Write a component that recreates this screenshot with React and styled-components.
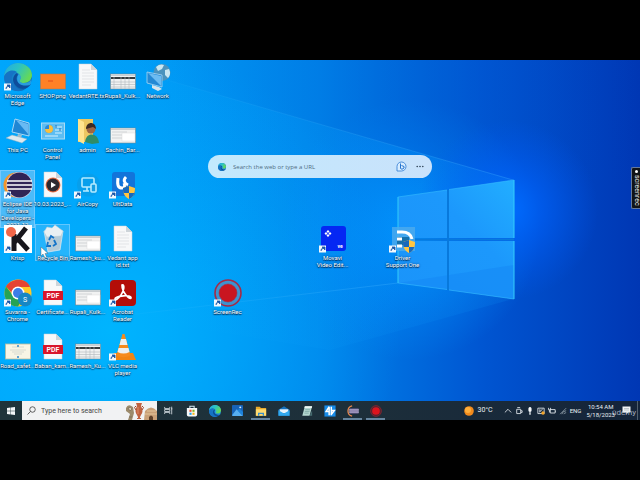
import React from "react";
import styled, { createGlobalStyle, css } from "styled-components";

const GlobalStyle = createGlobalStyle`
  * { box-sizing: border-box; }
  body {
    margin: 0;
    background: #000;
    font-family: Roboto, "Open Sans", sans-serif;
  }
  button {
    font: inherit;
    color: inherit;
    border: 0;
    padding: 0;
    background: none;
  }
  svg { display: block; }
`;

const Page = styled.main`
  min-height: 100vh;
  display: flex;
  flex-direction: column;
  justify-content: center;
  background: #000;
`;

const Screen = styled.div`
  position: relative;
  aspect-ratio: 16 / 9;
  display: flex;
  flex-direction: column;
  overflow: hidden;
`;

const Desktop = styled.section`
  position: relative;
  flex: 1;
  min-height: 0;
  background: #0078e8;
`;

const Wallpaper = styled.svg`
  position: absolute;
  inset: 0;
  width: 100%;
  height: 100%;
`;

const IconGrid = styled.ul`
  position: relative;
  margin: 0;
  padding: 2px 0 0;
  list-style: none;
  display: grid;
  grid-template-columns: repeat(auto-fill, 35px);
  grid-auto-rows: 54px;
`;

const IconCell = styled.li`
  grid-column: ${(p) => p.$col};
  grid-row: ${(p) => p.$row};
`;

const Shortcut = styled.button`
  position: relative;
  width: 35px;
  display: flex;
  flex-direction: column;
  align-items: center;
  padding-top: 1px;
  gap: 1px;
  ${(p) =>
    p.$state === "selected" &&
    css`
      background: rgba(150, 205, 245, 0.5);
      box-shadow: inset 0 0 0 1px rgba(170, 220, 255, 0.45);
    `}
  ${(p) =>
    p.$state === "hover" &&
    css`
      background: rgba(130, 205, 250, 0.28);
      box-shadow: inset 0 0 0 1px rgba(150, 215, 255, 0.55);
    `}
`;

const IconArt = styled.svg`
  width: 28px;
  height: 28px;
  overflow: visible;
`;

const IconLabel = styled.span`
  color: #fff;
  font-size: 6px;
  line-height: 7px;
  white-space: pre;
  text-align: center;
  text-shadow: 0 1px 1px rgba(0, 20, 50, 0.95), 0 0 2px rgba(0, 30, 70, 0.9);
`;

const SearchBar = styled.form`
  position: absolute;
  top: 95px;
  left: 0;
  right: 0;
  margin: 0 auto;
  width: 35%;
  height: 23px;
  padding: 0 6px 0 10px;
  display: flex;
  align-items: center;
  gap: 7px;
  border-radius: 12px;
  background: linear-gradient(90deg, #c2e9fd, #c9e2fb);
  color: #35506b;
`;

const WebInput = styled.input`
  flex: 1;
  min-width: 0;
  border: 0;
  padding: 0;
  outline: 0;
  background: none;
  font-family: "Open Sans", sans-serif;
  font-size: 6px;
  color: #4d6478;
  &::placeholder { color: #4f6c82; opacity: 1; }
`;

const BarButton = styled.button`
  width: 12px;
  height: 12px;
  display: grid;
  place-items: center;
`;

const RecorderTab = styled.button`
  position: absolute;
  right: 0;
  top: 107px;
  width: 9px;
  height: 42px;
  display: flex;
  align-items: center;
  justify-content: center;
  gap: 2px;
  writing-mode: vertical-rl;
  background: #111418;
  border: 1px solid #66799a;
  border-right: 0;
  border-radius: 2px 0 0 2px;
  color: #e8e8e8;
  font-size: 7px;
  line-height: 7px;
`;

const RecorderDot = styled.span`
  width: 3px;
  height: 3px;
  border-radius: 50%;
  background: #fff;
`;

const Pointer = styled.svg`
  position: absolute;
  left: 40px;
  top: 187px;
  width: 8px;
  height: 11px;
`;

const Taskbar = styled.footer`
  height: 19px;
  display: flex;
  align-items: stretch;
  color: #e8eef2;
  background: linear-gradient(90deg, #1f343b, #1d2f3a 55%, #14243a);
`;

const StartButton = styled.button`
  width: 22px;
  display: grid;
  place-items: center;
`;

const TaskSearch = styled.label`
  width: 135px;
  display: flex;
  align-items: center;
  gap: 5px;
  padding-left: 5px;
  background: #f1f2f3;
`;

const TaskInput = styled.input`
  flex: 1;
  min-width: 0;
  border: 0;
  padding: 0;
  outline: 0;
  background: none;
  font-family: Roboto, "Open Sans", sans-serif;
  font-size: 7px;
  &::placeholder { color: #454545; opacity: 1; }
`;

const AppButton = styled.button`
  width: 23px;
  display: grid;
  place-items: center;
  ${(p) =>
    p.$open &&
    css`
      background: linear-gradient(#66859f, #66859f) center bottom / 19px 2px no-repeat;
    `}
`;

const Tray = styled.div`
  margin-left: auto;
  display: flex;
  align-items: center;
  gap: 3px;
  padding-right: 3px;
  border-right: 1px solid #51606e;
  margin-right: 2px;
`;

const Weather = styled.button`
  display: flex;
  align-items: center;
  gap: 4px;
  margin-right: 8px;
  font-size: 7px;
  line-height: 9px;
`;

const TrayButton = styled.button`
  width: 8px;
  height: 10px;
  display: grid;
  place-items: center;
`;

const Language = styled.button`
  font-size: 6px;
  line-height: 8px;
  margin-right: 2px;
`;

const Clock = styled.time`
  display: flex;
  flex-direction: column;
  align-items: center;
  font-size: 6px;
  line-height: 8px;
  white-space: nowrap;
`;

const Notifications = styled(TrayButton)`
  width: 16px;
`;

const Watermark = styled.span`
  position: absolute;
  right: 4px;
  bottom: 2px;
  color: rgba(215, 222, 230, 0.75);
  font-size: 8px;
  line-height: 10px;
`;

const EdgeLogo = () => (
  <>
    <circle cx="14" cy="14" r="14" fill="url(#edgeBlue)" />
    <path d="M0 13C1 5 7 0 14 0c8 0 14 6 14 12 0 5-4 8-8 8-4 0-5-2-4-3 1-2 1-4-1-6C11 7 3 8 0 13z" fill="url(#edgeGreen)" />
    <path d="M0 14C2 8 8 6 13 9c-4 1-6 5-5 9 1 6 7 9 12 9C10 31 0 24 0 14z" fill="#1673c5" />
    <path d="M13 10c-5 3-5 9-1 13 4 4 11 4 15-2-4 2-9 2-12-1-3-2-3-6-1-8z" fill="#0d4d9c" />
    <path d="M15 11c2 2 2 4 1 6-1 1 0 3 4 3 3 0 6-1 7.500-4 0 2-.5 4-1.500 6-4 1-9 1-11.500-2-2-3-1.500-7 .5-9z" fill="#35b8f4" opacity=".65" />
  </>
);

const EclipseLogo = () => (
  <>
    <circle cx="12" cy="14" r="12.500" fill="#f3952a" />
    <circle cx="15.500" cy="14" r="13" fill="#d9d4ec" />
    <circle cx="15.500" cy="14" r="12.500" fill="#302456" />
    <path d="M3 10h25M3 14h25M3 18h25" stroke="#fff" strokeWidth="1.700" />
  </>
);

const Sheet = () => (
  <>
    <path d="M5 1h12l6 6v19H5z" fill="#f7f8f9" stroke="#c9d0d5" strokeWidth=".5" />
    <path d="M17 1v6h6z" fill="#cdd4d9" />
  </>
);

const TextFile = () => (
  <>
    <Sheet />
    <path d="M8 7h8M8 10h12M8 13h12M8 16h12M8 19h12M8 22h9" stroke="#d9dde0" strokeWidth=".7" />
  </>
);

const PdfFile = () => (
  <>
    <Sheet />
    <rect x="4" y="12" width="20" height="9" fill="#d8162b" />
    <text x="14" y="19" fontSize="7" fontWeight="600" fill="#fff" textAnchor="middle">PDF</text>
  </>
);

const SheetShot = ({ dark }) => (
  <>
    <rect x="1.500" y="11" width="25" height="15" fill="#f1f2f2" stroke="#6f8590" strokeWidth=".6" />
    <path d="M2 12.500h24" stroke="#c9ced1" />
    {dark ? (
      <>
        <rect x="2" y="14" width="24" height="2" fill="#363b3e" />
        <path d="M2 19h24M2 21.500h24M2 24h24" stroke="#b0b6b9" strokeWidth=".6" />
        <path d="M5 14v12M12 14v12M16 14v12M20 14v12" stroke="#b4bbbf" strokeWidth=".6" />
      </>
    ) : (
      <>
        <path d="M3 15h15M3 18h10M3 21h10" stroke="#b0b5b8" strokeWidth=".5" />
        <rect x="13" y="16" width="13" height="8" fill="#fff" stroke="#d5d7d8" strokeWidth=".4" />
      </>
    )}
  </>
);

const Shield = () => (
  <g>
    <path d="M14 17l6-2 6 2c0 6-2 9-6 11-4-2-6-5-6-11z" fill="#ffc541" />
    <path d="M20 15l-6 2c0 2 .1 3.500.6 5H20zM20 22h5.400c-1 3-2.700 5-5.400 6z" fill="#1769bd" />
  </g>
);

const art = {
  edge: <EdgeLogo />,
  shop: (
    <>
      <rect x="1.500" y="11" width="25" height="15" fill="#ff8126" stroke="#b5794e" strokeWidth=".6" />
      <path d="M9 18h5" stroke="#e34a1b" strokeWidth="1" />
    </>
  ),
  text: <TextFile />,
  sheetDark: <SheetShot dark />,
  sheet: <SheetShot />,
  network: (
    <>
      <circle cx="18" cy="9.500" r="8.500" fill="#4b93bd" />
      <path d="M12 4c3-3 6-3 8-2l-2 4-4 2zM21 7l4-1c2 4 1 7-1 9l-3-3z" fill="#c9e7f2" />
      <path d="M3 9l15 3v12L3 20z" fill="#2489d4" stroke="#a9d8f2" strokeWidth=".8" />
      <path d="M4 10l13 3v10z" fill="#6cbcf2" />
      <path d="M8 22l7 2 3 2-4 2-6-3z" fill="#d6e4ec" />
    </>
  ),
  pc: (
    <>
      <path d="M11 2l14 4v13L8 15z" fill="#1f86d4" stroke="#a8d8f4" strokeWidth="1" />
      <path d="M12 3l12 4v10z" fill="#68baf3" />
      <path d="M14 17l4 1-1 3-4-1z" fill="#9fbccc" />
      <path d="M2 21l6-3 15 4-5 4z" fill="#dce9ef" stroke="#88aabe" strokeWidth=".5" />
    </>
  ),
  control: (
    <>
      <rect x="2.500" y="6" width="23" height="16" fill="#5dbdf2" stroke="#a9dcf5" />
      <circle cx="10" cy="12" r="4" fill="#2a88d9" />
      <path d="M10 12V8a4 4 0 1 1-4 4z" fill="#f9bf3d" />
      <path d="M16 10h7M16 13h7M16 16h7M6 19h13" stroke="#d6f1ff" strokeWidth="1" />
      <path d="M17 8v3M21 11v3" stroke="#2373b7" />
    </>
  ),
  admin: (
    <>
      <path d="M4 2h15v23H4z" fill="#ecc863" />
      <path d="M4 2l6 3v22l-6-3z" fill="#ffe48f" />
      <circle cx="17" cy="12" r="4.500" fill="#9c6544" />
      <path d="M12 12c0-8 10-8 10 0l-3-2z" fill="#3c2a24" />
      <path d="M11 25c1-10 13-10 14 1l-7 1z" fill="#2f8c68" />
    </>
  ),
  eclipse: <EclipseLogo />,
  media: (
    <>
      <Sheet />
      <circle cx="14" cy="14" r="7.500" fill="#ec7046" />
      <circle cx="14" cy="14" r="6.500" fill="#2d2930" />
      <path d="M12 11l5 3-5 3z" fill="#fff" />
    </>
  ),
  aircopy: (
    <>
      <circle cx="14.500" cy="14" r="11.500" fill="#079fec" />
      <g fill="none" stroke="#b5ebff" strokeWidth="1.600">
        <rect x="8" y="7" width="12" height="9" rx="1" />
        <path d="M13 16v4M9 20h6" />
        <rect x="17" y="13" width="5" height="8" rx="1" fill="#169fe2" />
      </g>
    </>
  ),
  utdate: (
    <>
      <rect x="3" y="1" width="23" height="24" rx="3" fill="#1274da" />
      <path d="M9 7c-1 7 0 10 4 10 3 0 3-3 2-5M17 6c-3 3-2 6 2 8" stroke="#fff" strokeWidth="3" fill="none" />
      <Shield />
    </>
  ),
  krisp: (
    <>
      <rect width="28" height="28" fill="#fff" />
      <path d="M10 9v17M10 18L22 3M14 14l10 11" stroke="#17161c" strokeWidth="5" />
      <circle cx="7" cy="7" r="5" fill="#f16648" />
    </>
  ),
  bin: (
    <>
      <path d="M5 6h19l-3 19-12 2z" fill="#b4cbd8" stroke="#dcebf2" strokeWidth=".7" />
      <path d="M5 7l3-5 5 1 3-3 4 3 4 3-2 5-14 1z" fill="#e9f0f3" stroke="#b7ccd5" strokeWidth=".5" />
      <path d="M10 15l2-4 3 2M15 15l2 4-3 2M12 21H8l1-4" fill="none" stroke="#1474c8" strokeWidth="1.800" />
    </>
  ),
  chrome: (
    <>
      <circle cx="14" cy="14" r="13.500" fill="#ffca28" />
      <path d="M2 7.500C8-2 23-1 26 8H14c-4 0-6 3-6 6z" fill="#e44434" />
      <path d="M2 7.500C-2 17 3 27 14 27.500l6-10c-3 4-9 3-11-1z" fill="#26a354" />
      <circle cx="14" cy="14" r="6.500" fill="#fff" />
      <circle cx="14" cy="14" r="5" fill="#3b7ee8" />
      <circle cx="21" cy="20.500" r="7" fill="#1687c4" />
      <text x="21" y="23" fontSize="7" fill="#fff" textAnchor="middle">S</text>
    </>
  ),
  pdf: <PdfFile />,
  acrobat: (
    <>
      <rect x="1" y="1" width="26" height="26" rx="4" fill="#b30d08" />
      <path d="M13 6c3-1 2 6-1 10-3 4-6 6-6 4 0-3 17-5 16-1-1 2-9-5-9-13z" fill="none" stroke="#fff" strokeWidth="1.700" />
    </>
  ),
  certificate: (
    <>
      <rect x="1.500" y="11" width="25" height="15" fill="#f8f5e5" stroke="#b9bc9f" strokeWidth=".8" />
      <path d="M8 14h12M6 17h16M8 19h12M10 21h8" stroke="#c3cac2" strokeWidth=".6" />
      <circle cx="14" cy="13" r="1" fill="#3587c6" />
      <circle cx="14" cy="24" r="1" fill="#3587c6" />
    </>
  ),
  vlc: (
    <>
      <path d="M5 20h19l3 7H2z" fill="#f18513" />
      <path d="M13.500 1h2l6 21c-4 3-10 3-14 0z" fill="#f68b1c" />
      <path d="M12 6h5l1.500 6h-8zM9.500 15h10l1 4c-4 2-8 2-12 0z" fill="#edf0ef" />
    </>
  ),
  screenrec: (
    <>
      <circle cx="14" cy="14" r="13" fill="#3c93cf" stroke="#a62a46" strokeWidth="1.600" />
      <circle cx="14" cy="14" r="9" fill="#c91520" stroke="#a62a46" strokeWidth=".6" />
    </>
  ),
  movavi: (
    <>
      <rect x="2" y="1" width="25" height="25" rx="3" fill="#0527f3" />
      <path d="M9 5l1.500 1.500L9 8 7.500 6.500zM9 9l1.500 1.500L9 12l-1.500-1.500zM7 7l1.500 1.500L7 10 5.500 8.500zM11 7l1.500 1.500L11 10 9.500 8.500z" fill="#fff" />
      <text x="21" y="23" fontSize="5" fontWeight="700" fill="#fff" textAnchor="middle">ve</text>
    </>
  ),
  driver: (
    <>
      <rect x="3" y="2" width="23" height="24" fill="#4eabee" opacity=".8" />
      <path d="M8 12h12v8H8z" fill="#1671ac" />
      <path d="M8 7h5c6 0 9 3 10 7M8 14h5M8 21h5" fill="none" stroke="#fff" strokeWidth="3" />
      <Shield />
    </>
  ),
};

const shortcuts = [
  { col: 1, row: 1, icon: "edge", label: "Microsoft\nEdge", link: true },
  { col: 1, row: 2, icon: "pc", label: "This PC" },
  { col: 1, row: 3, icon: "eclipse", label: "Eclipse IDE\nfor Java\nDevelopers -\n2021-12", link: true, state: "selected" },
  { col: 1, row: 4, icon: "krisp", label: "Krisp", link: true },
  { col: 1, row: 5, icon: "chrome", label: "Suvarna -\nChrome", link: true },
  { col: 1, row: 6, icon: "certificate", label: "Road_safet..." },
  { col: 2, row: 1, icon: "shop", label: "SHOP.png" },
  { col: 2, row: 2, icon: "control", label: "Control\nPanel" },
  { col: 2, row: 3, icon: "media", label: "10.03.2023_..." },
  { col: 2, row: 4, icon: "bin", label: "Recycle Bin", state: "hover" },
  { col: 2, row: 5, icon: "pdf", label: "Certificate..." },
  { col: 2, row: 6, icon: "pdf", label: "Baban_kam..." },
  { col: 3, row: 1, icon: "text", label: "VedantRTE.txt" },
  { col: 3, row: 2, icon: "admin", label: "admin" },
  { col: 3, row: 3, icon: "aircopy", label: "AirCopy", link: true },
  { col: 3, row: 4, icon: "sheet", label: "Ramesh_ku..." },
  { col: 3, row: 5, icon: "sheet", label: "Rupali_Kulk..." },
  { col: 3, row: 6, icon: "sheetDark", label: "Ramesh_Ku..." },
  { col: 4, row: 1, icon: "sheetDark", label: "Rupali_Kulk..." },
  { col: 4, row: 2, icon: "sheet", label: "Sachin_Bar..." },
  { col: 4, row: 3, icon: "utdate", label: "UltData", link: true },
  { col: 4, row: 4, icon: "text", label: "Vedant app\nid.txt" },
  { col: 4, row: 5, icon: "acrobat", label: "Acrobat\nReader", link: true },
  { col: 4, row: 6, icon: "vlc", label: "VLC media\nplayer", link: true },
  { col: 5, row: 1, icon: "network", label: "Network" },
  { col: 7, row: 5, icon: "screenrec", label: "ScreenRec", link: true },
  { col: 10, row: 4, icon: "movavi", label: "Movavi\nVideo Edit...", link: true },
  { col: 12, row: 4, icon: "driver", label: "Driver\nSupport One", link: true },
];

const DesktopIcon = ({ item }) => (
  <IconCell $col={item.col} $row={item.row}>
    <Shortcut type="button" $state={item.state}>
      <IconArt viewBox="0 0 28 28" aria-hidden="true">
        {art[item.icon]}
        {item.link && (
          <g>
            <rect x="0" y="20.500" width="7" height="7" fill="#f3f8fc" />
            <path d="M2 26c0-2 1-3 2.500-3M3 22h3v3z" fill="#1a57a8" stroke="#1a57a8" strokeWidth=".8" />
          </g>
        )}
      </IconArt>
      <IconLabel>{item.label}</IconLabel>
    </Shortcut>
  </IconCell>
);

const WallpaperArt = () => (
  <Wallpaper viewBox="0 0 640 341" preserveAspectRatio="none" aria-hidden="true">
    <defs>
      <linearGradient id="sky" x1="0" y1="0" x2="1" y2="0">
        <stop offset="0" stopColor="#00a6fc" />
        <stop offset=".25" stopColor="#009cf6" />
        <stop offset=".5" stopColor="#0084ea" />
        <stop offset=".75" stopColor="#0056d2" />
        <stop offset="1" stopColor="#0037b4" />
      </linearGradient>
      <radialGradient id="leftGlow" gradientUnits="userSpaceOnUse" cx="110" cy="270" r="290">
        <stop offset="0" stopColor="#00b8ff" stopOpacity=".85" />
        <stop offset="1" stopColor="#00a8ff" stopOpacity="0" />
      </radialGradient>
      <radialGradient id="midGlow" gradientUnits="userSpaceOnUse" cx="410" cy="170" r="130">
        <stop offset="0" stopColor="#0094ff" stopOpacity=".9" />
        <stop offset="1" stopColor="#0090ff" stopOpacity="0" />
      </radialGradient>
      <radialGradient id="paneGlow" gradientUnits="userSpaceOnUse" cx="508" cy="150" r="90">
        <stop offset="0" stopColor="#006cff" />
        <stop offset=".4" stopColor="#0060f8" stopOpacity=".65" />
        <stop offset="1" stopColor="#0058f0" stopOpacity="0" />
      </radialGradient>
      <linearGradient id="topShade" x1="0" y1="0" x2="1" y2="0">
        <stop offset="0" stopColor="#0068d8" stopOpacity="0" />
        <stop offset=".6" stopColor="#0058d0" stopOpacity=".3" />
        <stop offset="1" stopColor="#0050d0" stopOpacity="0" />
      </linearGradient>
      <linearGradient id="beam" x1="0" y1="0" x2="1" y2="0">
        <stop offset="0" stopColor="#12b0ff" stopOpacity="0" />
        <stop offset="1" stopColor="#10a0ff" stopOpacity=".14" />
      </linearGradient>
      <linearGradient id="ray" x1="0" y1="0" x2="1" y2="0">
        <stop offset="0" stopColor="#4cc6ff" stopOpacity=".05" />
        <stop offset="1" stopColor="#3fb0ff" stopOpacity=".35" />
      </linearGradient>
      <linearGradient id="pane" x1="0" y1="1" x2="1" y2="0">
        <stop offset="0" stopColor="#1a94fa" />
        <stop offset=".6" stopColor="#1c98fc" />
        <stop offset="1" stopColor="#22aeff" />
      </linearGradient>
      <linearGradient id="edgeBlue" x1="0" y1="0" x2="1" y2="1">
        <stop offset="0" stopColor="#1b9de2" />
        <stop offset="1" stopColor="#0c59a4" />
      </linearGradient>
      <linearGradient id="edgeGreen" x1="0" y1="0" x2="1" y2=".5">
        <stop offset="0" stopColor="#24a9e4" />
        <stop offset=".5" stopColor="#2bc2c4" />
        <stop offset="1" stopColor="#65d957" />
      </linearGradient>
    </defs>
    <rect width="640" height="341" fill="url(#sky)" />
    <rect width="640" height="341" fill="url(#leftGlow)" />
    <rect width="640" height="341" fill="url(#midGlow)" />
    <path d="M130 0H640V120H513L160 18z" fill="url(#topShade)" />
    <rect width="640" height="341" fill="url(#paneGlow)" />
    <path d="M160 18L513 120 398 137V223L150 252z" fill="url(#beam)" />
    <path d="M160 18L513 120" stroke="url(#ray)" />
    <path d="M120 256L398 223 513 239 330 290z" fill="url(#beam)" />
    <path d="M120 256L398 223" stroke="url(#ray)" />
    <path d="M398 137L447 130V178H398zM449 129.500L514 120V178H449zM398 181H447V229.500L398 223zM449 181H514V239L449 230z" fill="url(#pane)" />
    <path d="M398 223L514 205V239L449 230z" fill="#1384f5" opacity=".45" />
    <path d="M398 223V137M514 120V178M514 181V239" fill="none" stroke="#35cdfa" strokeWidth="1" />
    <path d="M447 130L398 137M398 223L447 229.500M449 129.500L514 120M514 239L449 230" fill="none" stroke="#35bdff" strokeWidth="1" opacity=".6" />
    <path d="M398 179.500H514M448 130V230" stroke="#0879dc" strokeWidth="2" />
  </Wallpaper>
);

const TaskIcon = ({ size = 12, children }) => (
  <svg width={size} height={size} viewBox="0 0 28 28" aria-hidden="true">
    {children}
  </svg>
);

const apps = [
  {
    name: "Task View",
    size: 9,
    art: <path d="M2 3v5h16V3M2 25v-5h16v5M2 11h16v6H2zM24 2v24M22 9h4" fill="none" stroke="#dce4e8" strokeWidth="2.500" />,
  },
  {
    name: "Microsoft Store",
    art: (
      <>
        <path d="M9 8V3h10v5" fill="none" stroke="#d5e9f4" strokeWidth="2.500" />
        <path d="M2 7h24v16q0 4-4 4H6q-4 0-4-4z" fill="#f6f8f9" />
        <path d="M8 11h5v5H8z" fill="#ef5030" />
        <path d="M15 11h5v5h-5z" fill="#7fba25" />
        <path d="M8 18h5v5H8z" fill="#2ca3e4" />
        <path d="M15 18h5v5h-5z" fill="#fbb81d" />
      </>
    ),
  },
  { name: "Edge", art: <EdgeLogo /> },
  {
    name: "Photos",
    size: 11,
    art: (
      <>
        <rect width="28" height="28" rx="2" fill="#1762b7" />
        <path d="M0 26L12 11l16 17H2z" fill="#57aef0" />
        <path d="M14 14l5-5 9 9v10z" fill="#1d83dc" />
        <circle cx="21" cy="6" r="2.500" fill="#dff1ff" />
      </>
    ),
  },
  {
    name: "File Explorer",
    open: true,
    art: (
      <>
        <path d="M2 4h9l3 3h12v18H2z" fill="#e8aa2c" />
        <path d="M2 10h24v15H2z" fill="#ffdb70" />
        <path d="M7 18h14v7h-3v-4h-8v4H7z" fill="#378fcb" />
      </>
    ),
  },
  {
    name: "Mail",
    art: (
      <>
        <path d="M1 11L14 3l13 8v14H1z" fill="#1471bd" />
        <path d="M4 10h20v9H4z" fill="#e7f4fc" />
        <path d="M1 12l13 8 13-8v13H1z" fill="#31a9ee" />
      </>
    ),
  },
  {
    name: "Notepad",
    art: (
      <>
        <path d="M9 3h17l-6 22H3z" fill="#b4d6cf" />
        <path d="M9 3h17l-1 4H8z" fill="#eef6f3" />
        <path d="M10 11h11M9 15h11M8 19h10" stroke="#6d9b98" strokeWidth="1.500" />
        <path d="M20 25l6-12v12z" fill="#466c70" />
      </>
    ),
  },
  {
    name: "4uKey",
    art: (
      <>
        <rect x="1" y="1" width="26" height="26" fill="#168be8" />
        <path d="M12 4L5 15h7M12 4v20M17 4v20M17 13h7l-7 9" fill="none" stroke="#fff" strokeWidth="3.500" />
      </>
    ),
  },
  {
    name: "Eclipse",
    open: true,
    art: (
      <>
        <path d="M12 2C-1 5-1 23 12 26" fill="none" stroke="#e9874d" strokeWidth="3" />
        <path d="M6 8h21v12H6z" fill="#6a5d92" />
        <path d="M4 11h24M4 14h24M4 17h24" stroke="#cfc9e2" strokeWidth="1.500" />
      </>
    ),
  },
  {
    name: "ScreenRec",
    open: true,
    art: (
      <>
        <circle cx="14" cy="14" r="12.500" fill="#4d2431" stroke="#8e2430" strokeWidth="2" />
        <circle cx="14" cy="14" r="9" fill="#dc141e" />
      </>
    ),
  },
];

const trayIcons = [
  { name: "Show hidden icons", art: <path d="M3 19l11-11 11 11" /> },
  { name: "Meet Now", art: <path d="M6 8h14v15H6zM8 2h10M20 13h5v6h-5" /> },
  {
    name: "Microphone",
    art: (
      <>
        <rect x="10" y="1" width="8" height="16" rx="4" fill="#fff" />
        <path d="M14 18v9" strokeWidth="5" />
      </>
    ),
  },
  {
    name: "Security",
    art: (
      <>
        <path d="M3 4h22v19H3zM8 18L20 7M10 8v9" />
        <circle cx="21" cy="21" r="6" fill="#f2a52b" stroke="none" />
      </>
    ),
  },
  { name: "Battery", art: <path d="M8 9h17v12H8zM27 13v4M2 3v7h7V3M5 10v9" /> },
  {
    name: "Wi-Fi",
    art: <path d="M4 25L25 4M10 25Q11 15 25 13M17 25q1-5 8-5" stroke="#8c9aa5" />,
  },
];

export default function App() {
  return (
    <Page>
      <GlobalStyle />
      <Screen>
        <Desktop>
          <WallpaperArt />
          <IconGrid>
            {shortcuts.map((item) => (
              <DesktopIcon key={`${item.col}-${item.row}`} item={item} />
            ))}
          </IconGrid>
          <SearchBar>
            <TaskIcon size={8}><EdgeLogo /></TaskIcon>
            <WebInput aria-label="Search the web" placeholder="Search the web or type a URL" />
            <BarButton type="button" aria-label="Bing chat">
              <svg width="11" height="11" viewBox="0 0 22 22" aria-hidden="true">
                <path d="M2 20V11a9 9 0 1 1 9 9z" fill="#d8edff" stroke="#3b83d6" strokeWidth="1.800" />
                <path d="M9 5v10l3 1.500 4-2.500v-3l-5-2" fill="none" stroke="#2474cf" strokeWidth="2" />
              </svg>
            </BarButton>
            <BarButton type="button" aria-label="More options">
              <svg width="8" height="3" viewBox="0 0 8 3" aria-hidden="true">
                <circle cx="1.200" cy="1.500" r=".8" fill="#2f4356" />
                <circle cx="4" cy="1.500" r=".8" fill="#2f4356" />
                <circle cx="6.800" cy="1.500" r=".8" fill="#2f4356" />
              </svg>
            </BarButton>
          </SearchBar>
          <RecorderTab type="button">
            <RecorderDot />
            screenrec
          </RecorderTab>
          <Pointer viewBox="0 0 8 11" aria-hidden="true">
            <path d="M1 0v9l2-2 2 4 1.500-1L5 6.500h3z" fill="#fff" stroke="#4a5a66" strokeWidth=".4" />
          </Pointer>
        </Desktop>

        <Taskbar>
          <StartButton type="button" aria-label="Start">
            <svg width="8" height="8" viewBox="0 0 8 8" aria-hidden="true">
              <path d="M0 1l3.600-.5v3.200H0zM4 .4L8 0v3.700H4zM0 4.200h3.600v3.300L0 7zM4 4.200h4V8l-4-.5z" fill="#f2f6f8" />
            </svg>
          </StartButton>
          <TaskSearch>
            <svg width="9" height="9" viewBox="0 0 18 18" aria-hidden="true">
              <circle cx="11" cy="7" r="5.500" fill="none" stroke="#3c3c3c" strokeWidth="1.600" />
              <path d="M7 11l-6 6" stroke="#3c3c3c" strokeWidth="1.600" />
            </svg>
            <TaskInput aria-label="Search Windows" placeholder="Type here to search" />
            <svg width="32" height="19" viewBox="0 0 32 19" aria-hidden="true">
              <path d="M1 7q2-5 7-1l1 6-2 7H3l2-6-4-3z" fill="#9c8b6c" />
              <path d="M3 7q3-2 4 1l-2 2zM4 16h3" fill="#d8cbb0" stroke="#756651" strokeWidth=".7" />
              <path d="M20 10q6-7 12 0v9H19z" fill="#c9a077" />
              <path d="M20 13h12M22 10h9" stroke="#e3c49a" />
              <path d="M24 19v-3q2-3 4 0v3z" fill="#5e4029" />
              <path d="M11 2h6l-1 3q3 5 0 9l-1 2v1h1v1h-4v-1h1v-1l-1-2q-3-4 0-9z" fill="#bf6240" />
              <path d="M11 5q-3 1 0 4M17 5q3 1 0 4" stroke="#a24528" fill="none" />
              <path d="M13 6v7" stroke="#e08b64" />
            </svg>
          </TaskSearch>
          {apps.map((app) => (
            <AppButton key={app.name} type="button" aria-label={app.name} $open={app.open}>
              <TaskIcon size={app.size}>{app.art}</TaskIcon>
            </AppButton>
          ))}
          <Tray>
            <Weather type="button">
              <svg width="10" height="10" viewBox="0 0 10 10" aria-hidden="true">
                <circle cx="5" cy="5" r="4.800" fill="#f28a1c" />
                <circle cx="4" cy="4" r="3" fill="#ffae3b" />
              </svg>
              30°C
            </Weather>
            {trayIcons.map((icon) => (
              <TrayButton key={icon.name} type="button" aria-label={icon.name}>
                <svg width="8" height="8" viewBox="0 0 28 28" fill="none" stroke="#e2e8ec" strokeWidth="3" aria-hidden="true">
                  {icon.art}
                </svg>
              </TrayButton>
            ))}
            <Language type="button">ENG</Language>
            <Clock>
              <span>10:54 AM</span>
              <span>5/18/2023</span>
            </Clock>
            <Notifications type="button" aria-label="Notifications">
              <svg width="9" height="9" viewBox="0 0 18 18" aria-hidden="true">
                <path d="M1 1h16v12h-5l-3 4v-4H1z" fill="#f0f3f5" />
                <path d="M4 5h10M4 8h10" stroke="#8a959d" />
              </svg>
            </Notifications>
          </Tray>
        </Taskbar>
        <Watermark>ûdemy</Watermark>
      </Screen>
    </Page>
  );
}
